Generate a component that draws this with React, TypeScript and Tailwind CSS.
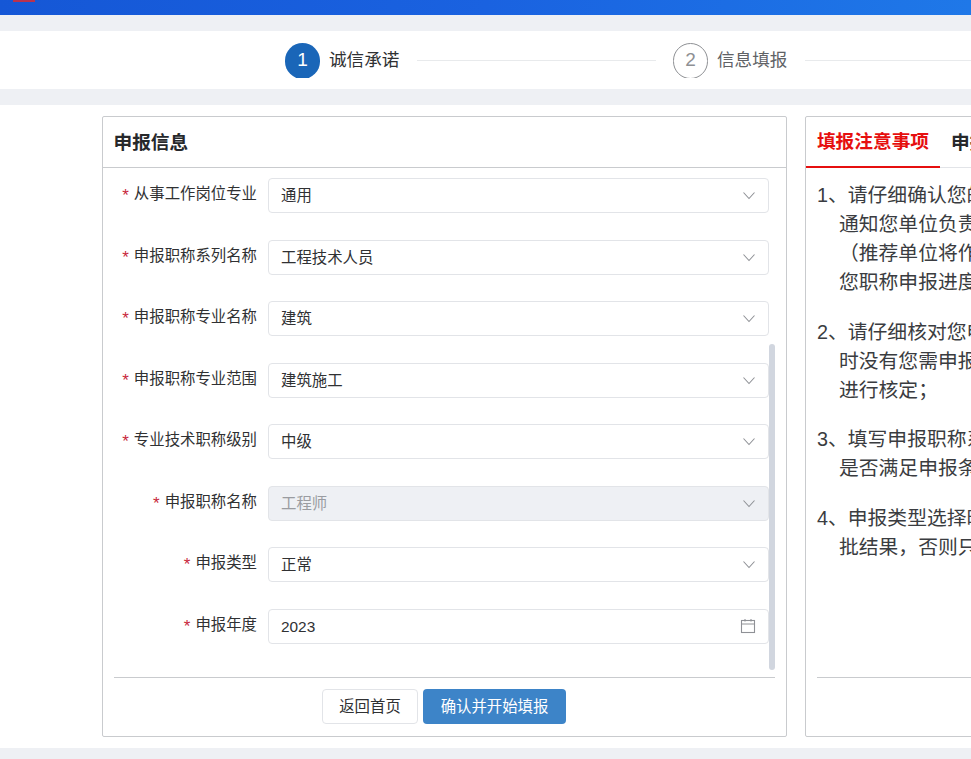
import React from "react";

const FONT = { fontFamily: '"Liberation Sans","Noto Sans CJK SC",sans-serif' };

function Chevron() {
  return (
    <svg width="14" height="9" viewBox="0 0 14 9" fill="none" className="shrink-0">
      <path d="M1.5 1.5 L7 7.5 L12.5 1.5" stroke="#8f9196" strokeWidth="1.1" />
    </svg>
  );
}

function CalendarIcon() {
  return (
    <svg width="16" height="16" viewBox="0 0 16 16" fill="none" className="shrink-0">
      <rect x="1.5" y="2.5" width="13" height="12" stroke="#8f9196" strokeWidth="1.1" />
      <path d="M1.5 6 H14.5 M5 1 V3.5 M11 1 V3.5" stroke="#8f9196" strokeWidth="1.1" />
    </svg>
  );
}

const rows: { label: string; value: string; disabled?: boolean; date?: boolean }[] = [
  { label: "从事工作岗位专业", value: "通用" },
  { label: "申报职称系列名称", value: "工程技术人员" },
  { label: "申报职称专业名称", value: "建筑" },
  { label: "申报职称专业范围", value: "建筑施工" },
  { label: "专业技术职称级别", value: "中级" },
  { label: "申报职称名称", value: "工程师", disabled: true },
  { label: "申报类型", value: "正常" },
  { label: "申报年度", value: "2023", date: true },
];

const notes = [
  ["1、请仔细确认您的工作单位信息，并及时", "通知您单位负责人员进行相关信息的确认", "（推荐单位将作为审核单位之一，影响", "您职称申报进度）；"],
  ["2、请仔细核对您申报的职称系列和专业，暂", "时没有您需申报专业的，请选择相近专业", "进行核定；"],
  ["3、填写申报职称系列后，系统将自动判断", "是否满足申报条件；"],
  ["4、申报类型选择时请确认相应的职称评审审", "批结果，否则只能选择正常申报。"],
];

function Step({ n, text, active }: { n: string; text: string; active?: boolean }) {
  return (
    <div className="flex items-center shrink-0 whitespace-nowrap">
      <div className="w-[35px] h-[35px] overflow-hidden shrink-0">
        <div
          className={
            active
              ? "w-[35px] h-[36px] rounded-full bg-[#1a66b8] text-white flex items-center justify-center text-[19px]"
              : "w-[35px] h-[36px] rounded-full border border-[#8e9094] text-[#8e9094] flex items-center justify-center text-[19px]"
          }
        >
          {n}
        </div>
      </div>
      <span className={active ? "ml-[9px] text-[17.6px] text-[#303133]" : "ml-[9px] text-[17.6px] text-[#606266]"}>
        {text}
      </span>
    </div>
  );
}

export default function App() {
  return (
    <div style={FONT} className="w-[971px] h-[759px] overflow-hidden bg-[#eef0f4] flex flex-col">
      <div className="relative h-[15px] shrink-0 bg-gradient-to-r from-[#1557d6] via-[#1a62e0] to-[#1f78e8]">
        <div className="absolute left-[13px] top-0 w-[22px] h-[2px] bg-[#b8324f]" />
      </div>

      <div className="mt-[16px] h-[58px] shrink-0 bg-white flex items-center pl-[285px]">
        <Step n="1" text="诚信承诺" active />
        <div className="ml-[17.6px] w-[239px] h-px bg-[#e8eaec] shrink-0" />
        <div className="ml-[17px] shrink-0">
          <Step n="2" text="信息填报" />
        </div>
        <div className="ml-[17.6px] w-[240px] h-px bg-[#e8eaec] shrink-0" />
      </div>

      <div className="mt-[16px] h-[643px] shrink-0 bg-white flex items-start pt-[11px] pl-[102px] gap-[18px]">
        <div className="relative w-[685px] h-[621px] shrink-0 border border-[#c9cbce] rounded-[2px] flex flex-col">
          <div className="h-[51px] shrink-0 border-b border-[#c9cbce] flex items-center pl-[10.5px] pt-[2px] text-[18.7px] font-bold text-[#26282b]">
            申报信息
          </div>
          <div className="h-[509px] shrink-0 pt-[10.3px] pr-[17px] overflow-hidden">
            {rows.map((r) => (
              <div key={r.label} className="flex mb-[26.5px]">
                <div className="w-[154px] shrink-0 text-right text-[15.4px] leading-[31px] text-[#303133] whitespace-nowrap">
                  <span className="relative top-[2px] text-[17px] text-[#c8283c] mr-[5px]">*</span>
                  {r.label}
                </div>
                <div
                  className={
                    r.disabled
                      ? "ml-[11px] flex-1 h-[35px] bg-[#eef0f4] border border-[#e2e4e8] rounded-[4px] flex items-center justify-between pl-[12px] pr-[12px] text-[15.4px] text-[#9a9ca1]"
                      : "ml-[11px] flex-1 h-[35px] bg-white border border-[#e2e4e8] rounded-[4px] flex items-center justify-between pl-[12px] pr-[12px] text-[15.4px] text-[#303133]"
                  }
                >
                  <span className={r.date ? "pt-[1px]" : ""}>{r.value}</span>
                  {r.date ? <CalendarIcon /> : <Chevron />}
                </div>
              </div>
            ))}
          </div>
          <div className="absolute left-[666px] top-[227px] w-[6px] h-[326px] rounded-[3px] bg-[#d1d6df]" />
          <div className="mx-[11px] w-[661px] border-t border-[#c9cbce] flex justify-center gap-[5px] pt-[11px] pr-[1px]">
            <button className="w-[96px] h-[35px] bg-white border border-[#e2e4e8] rounded-[4px] text-[15.4px] text-[#303133]">
              返回首页
            </button>
            <button className="w-[143px] h-[35px] bg-[#3d84c8] rounded-[4px] text-[15.4px] text-white">
              确认并开始填报
            </button>
          </div>
        </div>

        <div className="relative w-[400px] h-[621px] shrink-0 border border-[#c9cbce] rounded-[2px] flex flex-col">
          <div className="h-[51px] shrink-0 border-b border-[#e2e4e8] flex text-[18.7px] font-bold">
            <div className="w-[134px] h-[51px] shrink-0 border-b-[2.5px] border-[#e60f0f] text-[#e60f0f] flex items-center justify-center pt-[2px]">
              填报注意事项
            </div>
            <div className="ml-[11px] pt-[2px] flex items-center text-[#26282b] whitespace-nowrap">申报流程</div>
          </div>
          <div className="h-[509px] shrink-0 pl-[11px] pt-[13px] text-[19.8px] leading-[29px] text-[#3a3c40]">
            {notes.map((p, i) => (
              <div key={i} className="mb-[20.5px]">
                {p.map((line, j) => (
                  <div key={j} className={j === 0 ? "whitespace-nowrap" : "pl-[22px] whitespace-nowrap"}>
                    {line}
                  </div>
                ))}
              </div>
            ))}
          </div>
          <div className="mx-[11px] border-t border-[#c9cbce]" />
        </div>
      </div>
    </div>
  );
}
